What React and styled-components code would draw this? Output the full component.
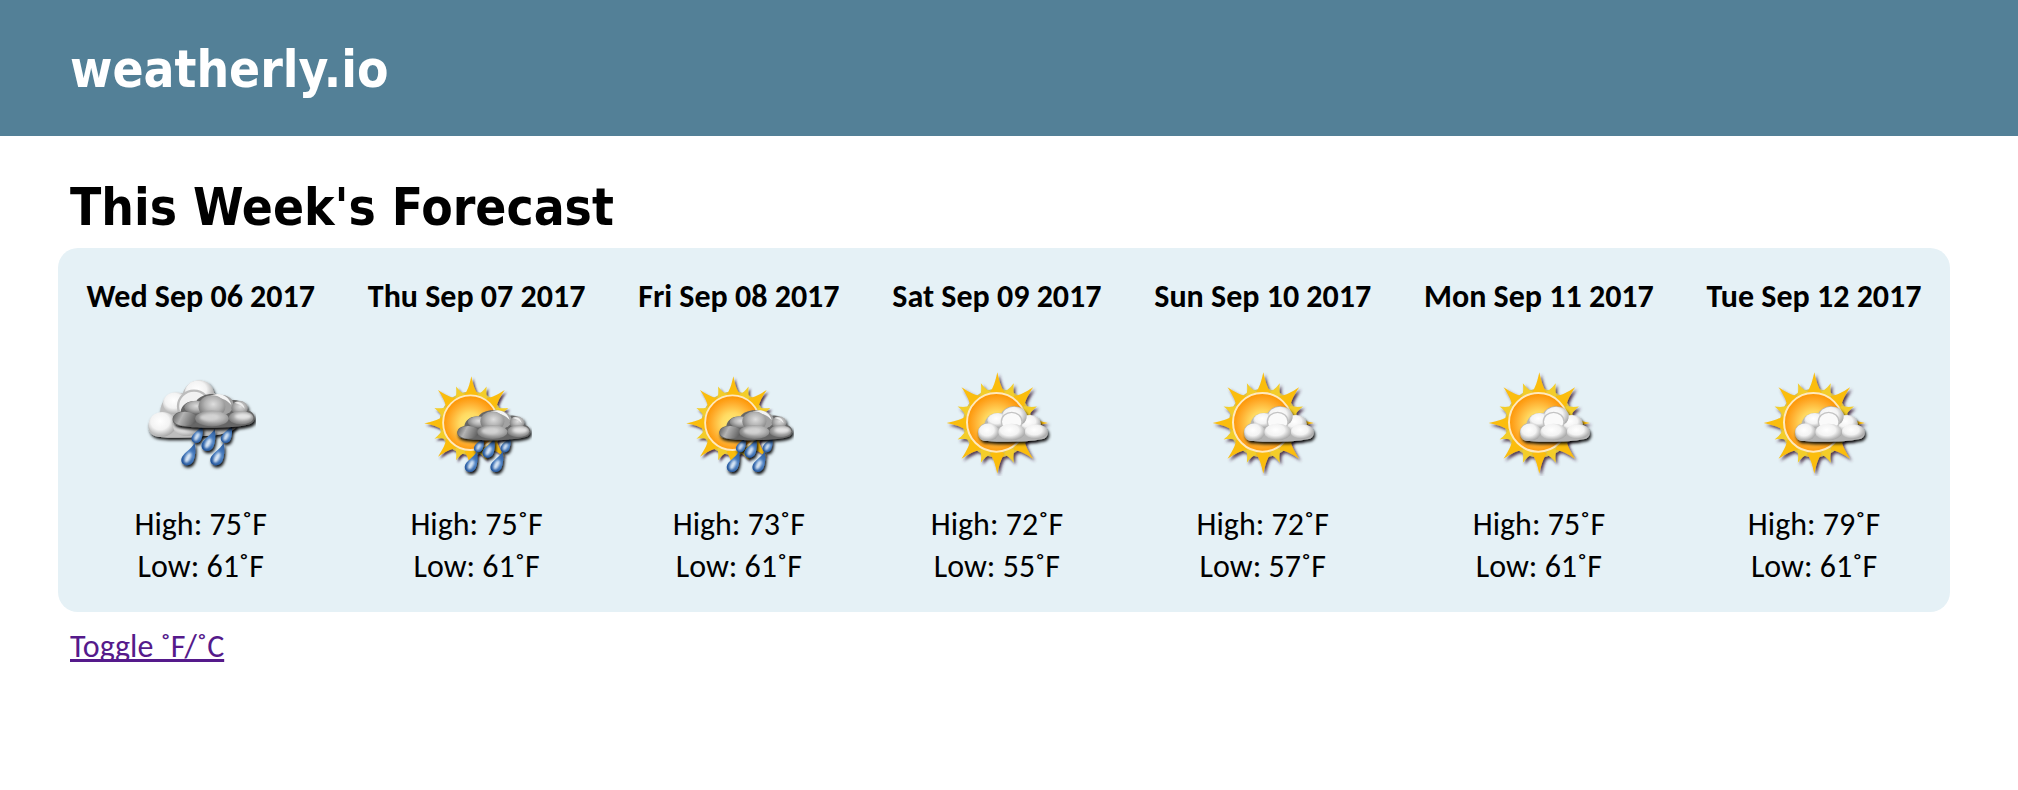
import React, { useState } from "react";
import styled, { createGlobalStyle } from "styled-components";

const GlobalStyle = createGlobalStyle`
  * { box-sizing: border-box; }
  body {
    margin: 0;
    background: #fff;
    color: #000;
    font-family: Calibri, Carlito, Lato, sans-serif;
    font-size: 32px;
    line-height: 42px;
  }
`;

const Header = styled.header`
  background: #538097;
  padding: 38px 70px 34px;
`;

const Logo = styled.h1`
  margin: 0;
  color: #fff;
  font: bold 51px/64px Tahoma, "DejaVu Sans Condensed", "Open Sans", sans-serif;
`;

const Main = styled.main`
  padding: 40px 68px 40px 58px;
`;

const Title = styled.h2`
  margin: 0 12px 8px;
  font: bold 51px/64px Tahoma, "DejaVu Sans Condensed", "Open Sans", sans-serif;
`;

const Week = styled.section`
  display: flex;
  justify-content: space-around;
  padding: 29px 2px 24px;
  border-radius: 20px;
  background: #e5f1f6;
`;

const Day = styled.article`
  display: flex;
  flex-direction: column;
  align-items: center;
  text-align: center;
`;

const DateLabel = styled.h3`
  margin: 0;
  font-size: 32px;
  line-height: 40px;
  white-space: nowrap;
`;

const Picture = styled.svg`
  display: block;
  width: 110px;
  height: 110px;
  margin: 49px 0 28px;
`;

const Temperature = styled.p`
  margin: 0;
`;

const ToggleLink = styled.a`
  display: inline-block;
  margin: 15px 12px 0;
  line-height: 40px;
  color: #551a8b;
  text-decoration: underline;
  text-decoration-skip-ink: none;
`;

const Definitions = styled.svg`
  position: absolute;
  width: 0;
  height: 0;
`;

function WeatherDefs() {
  return (
    <Definitions aria-hidden="true">
      <defs>
        <radialGradient id="disc" cx="0.5" cy="0.52" r="0.5">
          <stop offset="0" stopColor="#fff07a" />
          <stop offset="0.4" stopColor="#ffda62" />
          <stop offset="0.78" stopColor="#ffab2a" />
          <stop offset="1" stopColor="#fd9606" />
        </radialGradient>
        <radialGradient id="white" cx="0.42" cy="0.38" r="0.62">
          <stop offset="0" stopColor="#fff" />
          <stop offset="0.55" stopColor="#f3f3f3" />
          <stop offset="1" stopColor="#aaa" />
        </radialGradient>
        <radialGradient id="grey" cx="0.55" cy="0.4" r="0.62">
          <stop offset="0" stopColor="#dedede" />
          <stop offset="0.5" stopColor="#b4b4b4" />
          <stop offset="1" stopColor="#757575" />
        </radialGradient>
        <linearGradient id="greyLeft" x1="0" x2="1" y1="0.3" y2="0.6">
          <stop offset="0" stopColor="#666" />
          <stop offset="0.35" stopColor="#b4b4b4" />
          <stop offset="1" stopColor="#5a5a5a" />
        </linearGradient>
        <linearGradient id="water" x1="0.9" x2="0.2" y1="0" y2="1">
          <stop offset="0" stopColor="#2c5c9f" />
          <stop offset="0.45" stopColor="#4d82c4" />
          <stop offset="1" stopColor="#1c4f97" />
        </linearGradient>
        <filter id="sunShadow" x="-20%" y="-20%" width="140%" height="140%">
          <feDropShadow dx="6" dy="7" stdDeviation="4" floodColor="#41203c" floodOpacity="0.9" />
        </filter>
        <filter id="cloudShadow" x="-20%" y="-20%" width="140%" height="150%">
          <feDropShadow dx="4" dy="7" stdDeviation="4" floodColor="#000" floodOpacity="0.95" />
        </filter>
        <filter id="soft" x="-30%" y="-30%" width="160%" height="160%">
          <feGaussianBlur stdDeviation="3" />
        </filter>
        <filter id="edge" x="-10%" y="-10%" width="120%" height="120%">
          <feGaussianBlur stdDeviation="1.5" />
        </filter>
      </defs>
    </Definitions>
  );
}

const EIGHTHS = [0, 45, 90, 135, 180, 225, 270, 315];

function Sun({ transform }) {
  return (
    <g transform={transform}>
      <g filter="url(#sunShadow)">
        <circle r="103" fill="#d9bf4d" />
        {EIGHTHS.map((angle) => (
          <path
            key={angle}
            d="M0-129C-5-112-9-104-17-94L0-80 17-94C9-104 5-112 0-129Z"
            fill="#f3cd29"
            transform={`rotate(${angle + 22.5})`}
          />
        ))}
        {EIGHTHS.map((angle) => (
          <path
            key={angle}
            d="M0-152C-6-124-11-108-22-92L0-78 22-92C11-108 6-124 0-152Z"
            fill="#fbbd0b"
            transform={`rotate(${angle})`}
          />
        ))}
      </g>
      <circle r="88" cx="-3" cy="-2" fill="url(#disc)" stroke="#ffe9bd" strokeWidth="6" />
    </g>
  );
}

function DarkCloud({ transform }) {
  return (
    <g transform={transform} filter="url(#cloudShadow)">
      <g filter="url(#edge)">
        <path
          d="M14 84C-6 80-4 52 22 48 26 28 44 18 64 20 78-4 134-8 150 22 168 10 194 20 196 42 226 48 228 76 204 82 170 92 50 94 14 84Z"
          fill="#666"
        />
        <ellipse cx="130" cy="30" rx="34" ry="27" fill="#a2a2a2" />
        <path d="M98 8C122-8 152 4 158 30 146 16 130 8 98 8Z" fill="#f4f4f4" />
        <ellipse cx="180" cy="38" rx="22" ry="19" fill="url(#grey)" />
        <path d="M166 24q22-8 28 16-10-12-28-16Z" fill="#eee" />
        <ellipse cx="62" cy="36" rx="30" ry="17" fill="url(#grey)" />
        <ellipse cx="106" cy="34" rx="36" ry="30" fill="url(#grey)" />
        <ellipse cx="34" cy="67" rx="32" ry="19" fill="url(#greyLeft)" />
        <ellipse cx="184" cy="64" rx="33" ry="18" fill="url(#grey)" />
        <ellipse cx="106" cy="66" rx="45" ry="21" fill="url(#grey)" />
        <ellipse cx="190" cy="60" rx="22" ry="7" fill="#e4e4e4" filter="url(#soft)" />
        <ellipse cx="98" cy="63" rx="24" ry="8" fill="#d2d2d2" filter="url(#soft)" />
      </g>
    </g>
  );
}

function LightCloud() {
  return (
    <g filter="url(#cloudShadow)">
      <g filter="url(#edge)">
        <path
          d="M160 242C138 234 138 200 164 190 170 166 192 156 214 160 232 130 278 132 292 168 312 164 330 178 332 196 360 202 360 236 334 238 290 248 190 246 160 242Z"
          fill="#b5b5b5"
        />
        <ellipse cx="300" cy="190" rx="32" ry="25" fill="url(#white)" />
        <ellipse cx="204" cy="181" rx="32" ry="22" fill="url(#white)" />
        <ellipse cx="253" cy="170" rx="37" ry="30" fill="url(#white)" />
        <ellipse cx="245" cy="185" rx="31" ry="28" fill="#fafafa" stroke="#c3c3c3" strokeWidth="4" />
        <ellipse cx="176" cy="216" rx="31" ry="26" fill="url(#white)" />
        <ellipse cx="318" cy="215" rx="34" ry="22" fill="url(#white)" />
        <ellipse cx="245" cy="216" rx="40" ry="25" fill="url(#white)" />
      </g>
    </g>
  );
}

function BackCloud() {
  return (
    <g filter="url(#cloudShadow)">
      <g filter="url(#edge)">
        <path
          d="M84 230C44 226 46 168 90 158 92 112 128 94 158 100 176 50 236 48 252 98L300 150 320 200Q300 225 220 228 150 238 84 230Z"
          fill="#bdbdbd"
        />
        <ellipse cx="137" cy="130" rx="38" ry="33" fill="url(#white)" />
        <ellipse cx="207" cy="98" rx="43" ry="37" fill="url(#white)" />
        <ellipse cx="192" cy="139" rx="48" ry="47" fill="#f1f1f1" stroke="#bcbcbc" strokeWidth="7" />
        <ellipse cx="97" cy="193" rx="41" ry="37" fill="url(#white)" />
        <ellipse cx="170" cy="196" rx="42" ry="32" fill="url(#white)" />
      </g>
    </g>
  );
}

function Drops({ places }) {
  return (
    <g filter="url(#cloudShadow)">
      {places.map(([x, y, scale]) => (
        <g key={`${x}-${y}`} transform={`translate(${x} ${y}) scale(${scale})`}>
          <path d="M2 0C5 18 4 36-2 50-10 66-36 64-34 44-31 28-9 20 2 0Z" fill="url(#water)" />
          <ellipse cx="-16" cy="40" rx="7" ry="15" fill="#dce9f7" transform="rotate(28 -16 40)" filter="url(#soft)" />
        </g>
      ))}
    </g>
  );
}

function WeatherIcon({ kind }) {
  if (kind === "rain") {
    return (
      <Picture viewBox="48 18 330 330" role="img" aria-label="Rain">
        <BackCloud />
        <Drops places={[[215, 194, 0.9], [252, 206, 1.1], [303, 194, 0.9], [192, 248, 1.12], [279, 248, 1.12]]} />
        <DarkCloud transform="translate(127 101) scale(1.12 1.13)" />
      </Picture>
    );
  }
  if (kind === "showers") {
    return (
      <Picture viewBox="36 18 330 330" role="img" aria-label="Sun and showers">
        <Sun transform="translate(184 190) scale(0.93)" />
        <Drops places={[[219, 228, 0.8], [251, 234, 0.98], [299, 228, 0.8], [199, 274, 1.02], [276, 274, 1.02]]} />
        <DarkCloud transform="translate(141 150)" />
      </Picture>
    );
  }
  return (
    <Picture viewBox="36 18 330 330" role="img" aria-label="Partly cloudy">
      <Sun transform="translate(202 189)" />
      <LightCloud />
    </Picture>
  );
}

const FORECAST = [
  { date: "Wed Sep 06 2017", kind: "rain", high: 75, low: 61 },
  { date: "Thu Sep 07 2017", kind: "showers", high: 75, low: 61 },
  { date: "Fri Sep 08 2017", kind: "showers", high: 73, low: 61 },
  { date: "Sat Sep 09 2017", kind: "cloudy", high: 72, low: 55 },
  { date: "Sun Sep 10 2017", kind: "cloudy", high: 72, low: 57 },
  { date: "Mon Sep 11 2017", kind: "cloudy", high: 75, low: 61 },
  { date: "Tue Sep 12 2017", kind: "cloudy", high: 79, low: 61 },
];

export default function App() {
  const [metric, setMetric] = useState(false);
  const format = (f) => (metric ? `${Math.round(((f - 32) * 5) / 9)}˚C` : `${f}˚F`);
  const toggle = (event) => {
    event.preventDefault();
    setMetric(!metric);
  };

  return (
    <>
      <GlobalStyle />
      <WeatherDefs />
      <Header>
        <Logo>weatherly.io</Logo>
      </Header>
      <Main>
        <Title>This Week's Forecast</Title>
        <Week>
          {FORECAST.map((day) => (
            <Day key={day.date}>
              <DateLabel>{day.date}</DateLabel>
              <WeatherIcon kind={day.kind} />
              <Temperature>High: {format(day.high)}</Temperature>
              <Temperature>Low: {format(day.low)}</Temperature>
            </Day>
          ))}
        </Week>
        <ToggleLink href="#" onClick={toggle}>Toggle ˚F/˚C</ToggleLink>
      </Main>
    </>
  );
}
